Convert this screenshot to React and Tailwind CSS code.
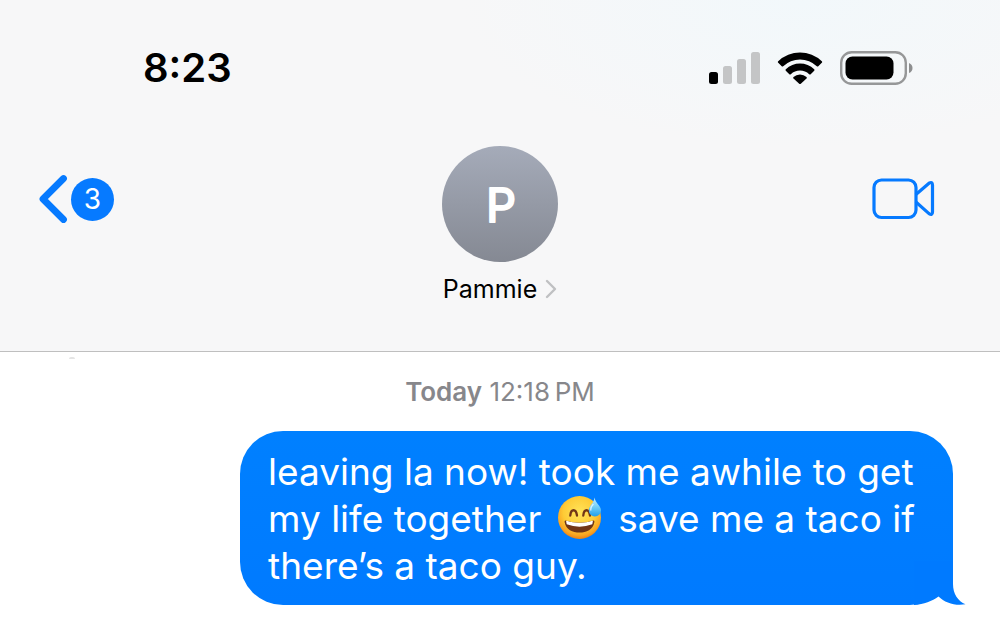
import React from "react";

function SignalIcon() {
  return (
    <svg className="h-8 w-[51px]" viewBox="0 0 51 32" role="img" aria-label="Cellular signal">
      <rect x="0" y="20" width="9" height="12" rx="2.5" fill="#000" />
      <rect x="14" y="14" width="9" height="18" rx="2.5" fill="#c4c5c6" />
      <rect x="28" y="7" width="9" height="25" rx="2.5" fill="#c4c5c6" />
      <rect x="42" y="0" width="9" height="32" rx="2.5" fill="#c4c5c6" />
    </svg>
  );
}

function WifiIcon() {
  return (
    <svg className="h-8 w-[46px]" viewBox="0 0 46 32" role="img" aria-label="Wi-Fi">
      <path d="M1.2 9.3A31.5 31.5 0 0 1 44.8 9.3Q45.500 10 44.8 10.8L41.3 14.2Q40.600 14.9 39.800 14.2A24.2 24.2 0 0 0 6.200 14.2Q5.400 14.900 4.700 14.2L1.200 10.800Q.5 10 1.200 9.300Z" />
      <path d="M8.800 17.200A20.4 20.4 0 0 1 37.200 17.200Q37.900 18 37.200 18.700L33.700 22.200Q32.900 22.900 32.200 22.200A13.400 13.400 0 0 0 13.800 22.200Q13.100 22.900 12.300 22.200L8.800 18.700Q8.100 18 8.800 17.200Z" />
      <path d="M16.500 25.100A9.300 9.300 0 0 1 29.500 25.100Q30.200 25.900 29.500 26.600L23.800 31.700Q23 32.300 22.200 31.700L16.500 26.600Q15.800 25.900 16.500 25.100Z" />
    </svg>
  );
}

function BatteryIcon() {
  return (
    <svg className="h-[34px] w-[73px]" viewBox="0 0 73 34" role="img" aria-label="Battery">
      <rect x="1.200" y="1.200" width="64.600" height="31.600" rx="10.500" fill="none" stroke="#969798" strokeWidth="2.400" />
      <rect x="5.500" y="5.500" width="48" height="23" rx="7" fill="#000" />
      <path d="M69 12Q72.500 13.500 72.500 17T69 22Z" fill="#8d8e8f" />
    </svg>
  );
}

function BackIcon() {
  return (
    <svg className="h-[50px] w-[30px]" viewBox="0 0 30 50" fill="none" stroke="#067aff" strokeWidth="6.800" strokeLinecap="round" strokeLinejoin="round" aria-hidden="true">
      <path d="M25.500 4.500L5 25L25.500 45.500" />
    </svg>
  );
}

function VideoIcon() {
  return (
    <svg className="h-11 w-16" viewBox="0 0 64 44" fill="none" stroke="#067aff" strokeWidth="3.200" strokeLinecap="round" strokeLinejoin="round" aria-hidden="true">
      <rect x="3" y="3" width="42" height="37.500" rx="7.500" />
      <path d="M45.500 17L58 6.200Q61.500 4.300 61.500 8V35Q61.500 38.700 58 36.600L45.500 25.500" />
    </svg>
  );
}

function SweatSmile() {
  return (
    <svg className="mx-1.5 inline-block h-11 w-11 align-[-7px]" viewBox="0 0 44 44" role="img" aria-label="Grinning face with sweat">
      <defs>
        <radialGradient id="face" cx="50%" cy="38%" r="62%">
          <stop offset="0" stopColor="#ffe45a" />
          <stop offset=".6" stopColor="#fecb36" />
          <stop offset=".86" stopColor="#f9a623" />
          <stop offset="1" stopColor="#ec8015" />
        </radialGradient>
        <linearGradient id="drop" x1="0" y1="0" x2="0" y2="1">
          <stop offset="0" stopColor="#c9f2ff" />
          <stop offset=".55" stopColor="#67c9f6" />
          <stop offset="1" stopColor="#219ee8" />
        </linearGradient>
        <clipPath id="mouth">
          <path d="M7.500 25.500Q21.500 30 35.500 25.500Q36.600 25.300 36.400 27C35 35 28.500 37.500 21.500 37.500S8 35 6.600 27Q6.400 25.300 7.500 25.500Z" />
        </clipPath>
      </defs>
      <circle cx="21.500" cy="22.500" r="21.500" fill="url(#face)" />
      <g clipPath="url(#mouth)">
        <rect x="5" y="23" width="34" height="16" fill="#713617" />
        <path d="M8 25.500Q21.500 29.500 35 25.500L34.300 29.300Q21.500 34 8.700 29.300Z" fill="#fff" />
      </g>
      <path d="M12.300 20.500C13 13.500 18 13.500 19 20.500M25.300 20.500C26 13.500 31 13.500 32 20.500" fill="none" stroke="#713617" strokeWidth="2.300" strokeLinecap="round" />
      <path d="M36.500 2.500C37.500 8.500 43 10.500 43 15.500A6.100 6.100 0 0 1 30.800 15.500C30.800 10.500 36 8.500 36.500 2.500Z" fill="url(#drop)" />
      <path d="M35 9.500Q32.500 12 32.800 15" fill="none" stroke="#fff" strokeOpacity=".7" strokeWidth="1.400" strokeLinecap="round" />
    </svg>
  );
}

function Avatar() {
  return (
    <span className="flex size-[116px] items-center justify-center rounded-full bg-linear-to-b from-[#a5abb9] to-[#858993]">
      <svg className="size-[60px]" viewBox="0 0 60 60" aria-hidden="true">
        <text x="31" y="48" textAnchor="middle" fontSize="47" fill="#fff" stroke="#fff" strokeWidth="2" strokeLinejoin="round">P</text>
      </svg>
    </span>
  );
}

export default function App() {
  return (
    <div className="min-h-screen bg-white font-['Inter','Liberation_Sans',sans-serif] text-black">
      <header className="border-b border-[#bfbfbf] bg-[#f7f7f8] bg-[radial-gradient(ellipse_at_80%_0%,#f2f8fb_0%,transparent_30%)] pb-11">
        <div className="flex items-center justify-between pt-11 pr-[87px] pl-[143px]">
          <time className="text-[40px] leading-12 font-semibold">8:23</time>
          <div className="flex items-center gap-[17px]">
            <SignalIcon />
            <WifiIcon />
            <BatteryIcon />
          </div>
        </div>
        <div className="grid grid-cols-[1fr_auto_1fr] items-start px-[38px] pt-[54px]">
          <button type="button" aria-label="Back, 3 unread messages" className="mt-7 flex items-center gap-[3px] justify-self-start">
            <BackIcon />
            <span className="flex size-[43px] items-center justify-center rounded-full bg-[#067aff] text-[28px] text-white">3</span>
          </button>
          <button type="button" className="flex flex-col items-center gap-[9px]">
            <Avatar />
            <span className="flex items-center gap-2 text-[25px] leading-9">
              Pammie
              <svg className="h-5 w-3" viewBox="0 0 12 20" fill="none" stroke="#bfc0c2" strokeWidth="2.400" strokeLinecap="round" strokeLinejoin="round" aria-hidden="true">
                <path d="M2 2L10 10L2 18" />
              </svg>
            </span>
          </button>
          <button type="button" aria-label="Start video call" className="mt-[31px] mr-[27px] justify-self-end">
            <VideoIcon />
          </button>
        </div>
      </header>
      <main className="relative pt-6 pb-5">
        <span className="absolute top-[5px] left-[69px] h-0.5 w-1.5 rounded-t-full bg-[#e4e4e4]" aria-hidden="true" />
        <p className="text-center text-[26px] leading-8 text-[#87878b]">
          <span className="font-semibold">Today</span> <time>12:18{"\u2009"}PM</time>
        </p>
        <div className="mt-[23px] flex justify-end pr-[47px] pl-6">
          <div className="relative rounded-[43px] bg-linear-to-b from-[#0080ff] to-[#007aff] pt-[17px] pr-[38px] pb-4 pl-7 text-[37px] leading-[47px] text-white">
            <p>
              leaving la now! took me awhile to get<br />
              my life together <SweatSmile /> save me a taco if<br />
              there’s a taco guy.
            </p>
            <svg className="absolute -right-[13px] bottom-0 h-11 w-[52px]" viewBox="0 -4 52 44" aria-hidden="true">
              <path d="M0 -4H39V19C39 29 44 36 51.500 39.300C41 41 31 38 24.500 31.500C18 36 10 39.500 0 40Z" fill="#007aff" />
            </svg>
          </div>
        </div>
      </main>
    </div>
  );
}
